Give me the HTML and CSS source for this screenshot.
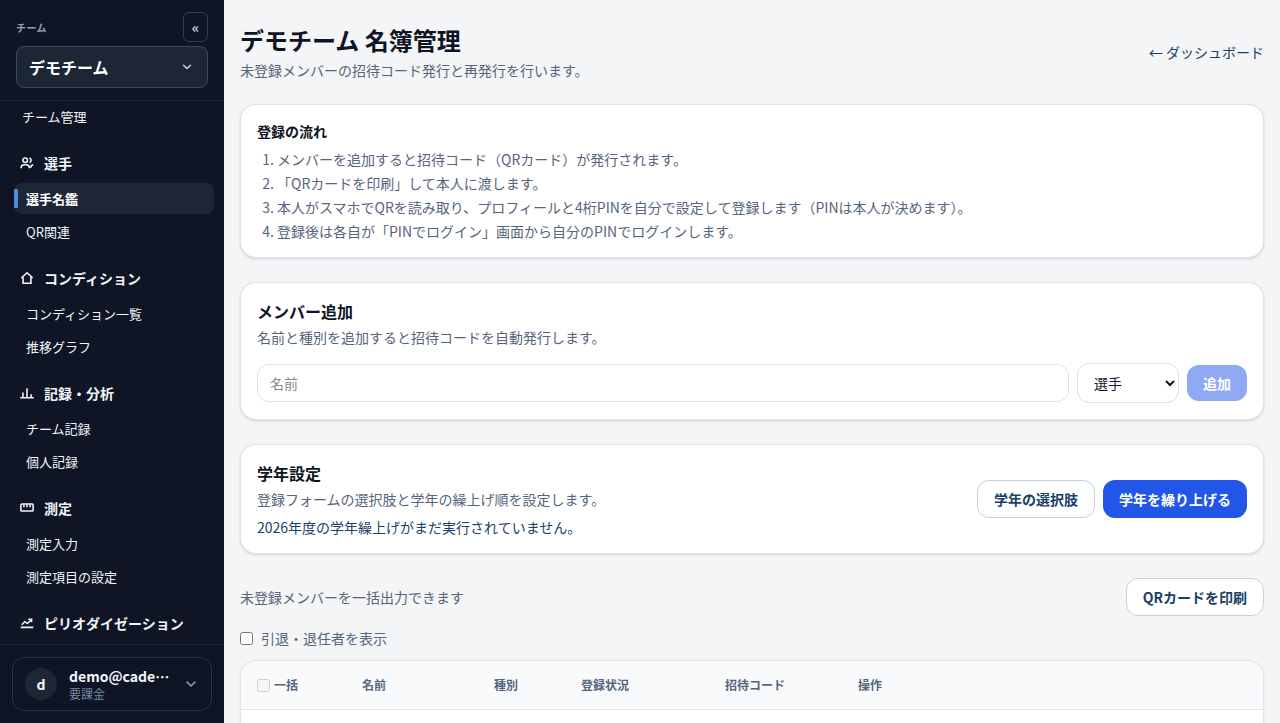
FILE: index.html
```html
<!DOCTYPE html>
<html lang="ja">
<head>
    <meta charset="UTF-8">
    <meta name="viewport" content="width=device-width, initial-scale=1.0">
    <title>デモチーム 名簿管理</title>
    <link rel="stylesheet" href="styles.css">
</head>
<body>
    <aside class="sidebar">
        <div class="sidebar-head">
            <div class="team-row">
                <span class="team-label">チーム</span>
                <button class="collapse">«</button>
            </div>
            <button class="team-select">
                <span>デモチーム</span>
                <svg class="chevron" viewBox="0 0 16 16"><path d="M4.500 6.200L8 9.500l3.500-3.300"/></svg>
            </button>
        </div>
        <nav class="nav">
            <a class="nav-top" href="#">チーム管理</a>
            <section class="nav-group">
                <h2>
                    <svg viewBox="0 0 16 16"><circle cx="6" cy="4.800" r="2.600"/><path d="M1.300 14v-1a3.500 3.500 0 0 1 3.500-3h2.400a3.500 3.500 0 0 1 3.500 3v1M10.800 2.300a2.600 2.600 0 0 1 0 5M12 13.500l1-2.500 2.200-1"/></svg>
                    選手
                </h2>
                <a class="active" href="#">選手名鑑</a>
                <a href="#">QR関連</a>
            </section>
            <section class="nav-group">
                <h2>
                    <svg viewBox="0 0 16 16"><path d="M1.500 8L8 2l6.500 6M3.500 7v7h9V7"/></svg>
                    コンディション
                </h2>
                <a href="#">コンディション一覧</a>
                <a href="#">推移グラフ</a>
            </section>
            <section class="nav-group">
                <h2>
                    <svg viewBox="0 0 16 16"><path d="M.3 13.500h15.400M3.300 13V7.500M8 13V2.500M12.700 13V9.500"/></svg>
                    記録・分析
                </h2>
                <a href="#">チーム記録</a>
                <a href="#">個人記録</a>
            </section>
            <section class="nav-group">
                <h2>
                    <svg viewBox="0 0 16 16"><rect x="1" y="3.500" width="14" height="8" rx="1"/><path d="M4.500 4v3M8 4v3M11.500 4v3"/></svg>
                    測定
                </h2>
                <a href="#">測定入力</a>
                <a href="#">測定項目の設定</a>
            </section>
            <section class="nav-group">
                <h2>
                    <svg viewBox="0 0 16 16"><path d="M.8 13h14.400M2 10l3.500-3.500 3 2L13 4M9.500 3.800h3.700v3.400"/></svg>
                    ピリオダイゼーション
                </h2>
            </section>
        </nav>
        <div class="sidebar-foot">
            <button class="account">
                <span class="avatar">d</span>
                <span class="account-text">
                    <span class="account-name">demo@cade⋯</span>
                    <span class="account-plan">要課金</span>
                </span>
                <svg class="chevron" viewBox="0 0 16 16"><path d="M4 6l4 4 4-4"/></svg>
            </button>
        </div>
    </aside>

    <main class="main">
        <header class="page-head">
            <div>
                <h1>デモチーム 名簿管理</h1>
                <p>未登録メンバーの招待コード発行と再発行を行います。</p>
            </div>
            <a href="#">← ダッシュボード</a>
        </header>

        <section class="card flow">
            <h3>登録の流れ</h3>
            <ol>
                <li>メンバーを追加すると招待コード（QRカード）が発行されます。</li>
                <li>「QRカードを印刷」して本人に渡します。</li>
                <li>本人がスマホでQRを読み取り、プロフィールと4桁PINを自分で設定して登録します（PINは本人が決めます）。</li>
                <li>登録後は各自が「PINでログイン」画面から自分のPINでログインします。</li>
            </ol>
        </section>

        <section class="card add">
            <h2>メンバー追加</h2>
            <p>名前と種別を追加すると招待コードを自動発行します。</p>
            <form class="add-form">
                <input type="text" placeholder="名前">
                <select>
                    <option>選手</option>
                    <option>スタッフ</option>
                </select>
                <button class="btn primary" type="button" disabled>追加</button>
            </form>
        </section>

        <section class="card grade">
            <div>
                <h2>学年設定</h2>
                <p>登録フォームの選択肢と学年の繰上げ順を設定します。</p>
                <p class="notice">2026年度の学年繰上げがまだ実行されていません。</p>
            </div>
            <div class="actions">
                <button class="btn outline">学年の選択肢</button>
                <button class="btn primary">学年を繰り上げる</button>
            </div>
        </section>

        <div class="export">
            <p>未登録メンバーを一括出力できます</p>
            <button class="btn outline">QRカードを印刷</button>
        </div>

        <label class="show-retired"><input type="checkbox">引退・退任者を表示</label>

        <div class="table-wrap">
            <table>
                <thead>
                    <tr>
                        <th class="col-bulk"><label><input type="checkbox" disabled>一括</label></th>
                        <th class="col-name">名前</th>
                        <th class="col-type">種別</th>
                        <th class="col-status">登録状況</th>
                        <th class="col-code">招待コード</th>
                        <th>操作</th>
                    </tr>
                </thead>
            </table>
        </div>
    </main>
</body>
</html>
```

FILE: styles.css
```css
* {
    box-sizing: border-box;
}
body {
    display: flex;
    height: 100vh;
    margin: 0;
    overflow: hidden;
    background-color: #f3f5f7;
    color: #0f1424;
    font-family: "Noto Sans CJK JP", sans-serif;
    font-size: 14px;
    line-height: 20px;
}
h1, h2, h3, p, ol {
    margin: 0;
}
a {
    text-decoration: none;
}
button, input, select {
    font: inherit;
}

/* sidebar */
.sidebar {
    display: flex;
    flex-direction: column;
    flex: none;
    width: 224px;
    background-color: #0f1525;
    color: #f1f5f9;
}
.sidebar-head {
    height: 101px;
    padding: 12px 16px;
    border-bottom: 1px solid #1e2635;
}
.team-row {
    display: flex;
    align-items: center;
    justify-content: space-between;
    height: 30px;
    margin-bottom: 4px;
}
.team-label {
    padding-top: 2px;
    color: #94a3b8;
    font-size: 10px;
    font-weight: 700;
    letter-spacing: 0.4px;
}
.collapse {
    width: 25px;
    height: 30px;
    padding: 0;
    border: 1px solid #333c4a;
    border-radius: 6px;
    background: none;
    color: #cbd5e1;
    font-size: 14px;
    font-weight: 700;
}
.team-select {
    display: flex;
    align-items: center;
    justify-content: space-between;
    width: 100%;
    height: 42px;
    padding: 0 12px;
    border: 1px solid #3f4957;
    border-radius: 8px;
    background-color: #1c2635;
    color: #fff;
    font-size: 16px;
    font-weight: 700;
}
.chevron {
    flex: none;
    width: 16px;
    height: 16px;
    fill: none;
    stroke: #cbd5e1;
    stroke-width: 1.5;
    stroke-linecap: round;
    stroke-linejoin: round;
}
.nav {
    flex: 1;
    min-height: 0;
    overflow: hidden;
    padding: 0 10px 0 14px;
}
.nav a {
    display: flex;
    align-items: center;
    height: 31px;
    margin-bottom: 2px;
    padding-left: 12px;
    border-radius: 8px;
    color: #f1f5f9;
    font-size: 13px;
}
.nav a.nav-top {
    padding-left: 8px;
    margin-bottom: 15px;
}
.nav-group {
    height: 115px;
}
.nav-group:last-child {
    height: 32px;
}
.nav-group h2 {
    display: flex;
    align-items: center;
    gap: 10px;
    height: 32px;
    margin-bottom: 4px;
    padding-left: 6px;
    font-size: 14px;
    font-weight: 700;
}
.nav-group h2 svg {
    width: 14px;
    height: 14px;
    fill: none;
    stroke: currentColor;
    stroke-width: 1.8;
}
.nav a.active {
    background-color: #1c2635;
    color: #fff;
    font-weight: 700;
}
.nav a.active::before {
    content: "";
    width: 4px;
    height: 19px;
    margin: 0 8px 0 -12px;
    border-radius: 1px;
    background-color: #4a90d9;
}
.sidebar-foot {
    height: 79px;
    padding: 12px;
    border-top: 1px solid #1e2635;
}
.account {
    display: flex;
    align-items: center;
    width: 100%;
    height: 54px;
    padding: 0 12px;
    border: 1px solid #2b3443;
    border-radius: 12px;
    background: none;
    color: #f1f5f9;
    text-align: left;
}
.account .chevron {
    stroke: #94a3b8;
}
.avatar {
    flex: none;
    width: 32px;
    height: 32px;
    margin-right: 12px;
    border-radius: 50%;
    background-color: #1c2635;
    font-weight: 700;
    line-height: 32px;
    text-align: center;
}
.account-text {
    flex: 1;
    min-width: 0;
    margin-right: 12px;
}
.account-name {
    display: block;
    font-weight: 700;
    line-height: 18px;
    white-space: nowrap;
}
.account-plan {
    display: block;
    padding-top: 1px;
    color: #7688a3;
    font-size: 12px;
    line-height: 16px;
}

/* main */
.main {
    flex: 1;
    display: flex;
    flex-direction: column;
    min-width: 0;
    padding: 24px 16px 0;
}
.page-head {
    display: flex;
    align-items: center;
    justify-content: space-between;
    height: 56px;
    margin-bottom: 24px;
}
.page-head h1 {
    margin-bottom: 4px;
    font-size: 24px;
    line-height: 32px;
}
.page-head a {
    color: #1a4068;
}
.main p {
    color: #56657c;
}
.card {
    flex: none;
    margin-bottom: 24px;
    padding: 16px;
    border: 1px solid #e0e4ea;
    border-radius: 16px;
    background-color: #fff;
    box-shadow: 0 1px 3px rgba(15, 20, 36, 0.1), 0 1px 2px rgba(15, 20, 36, 0.06);
}
.card h2 {
    font-size: 16px;
    line-height: 24px;
}
.flow {
    height: 154px;
}
.flow h3 {
    margin-bottom: 8px;
    font-size: 14px;
    line-height: 20px;
}
.flow ol {
    padding-left: 20px;
    color: #56657c;
}
.flow li {
    margin-bottom: 4px;
}
.add {
    height: 138px;
}
.add p {
    margin: 4px 0 16px;
}
.add-form {
    display: flex;
    align-items: center;
    gap: 8px;
}
.add-form input {
    flex: 1;
    height: 38px;
    padding: 0 12px;
    border: 1px solid #dde2e9;
    border-radius: 12px;
    background-color: #fff;
}
.add-form input::placeholder {
    color: #8a8a8a;
}
.add-form select {
    width: 102px;
    height: 40px;
    padding: 0 0 0 12px;
    border: 1px solid #dde2e9;
    border-radius: 12px;
    background-color: #fff;
    color: #0f1424;
}
.btn {
    height: 38px;
    padding: 0 16px;
    border: 1px solid transparent;
    border-radius: 12px;
    font-weight: 700;
}
.primary {
    border: none;
    background-color: #2156e8;
    color: #fff;
}
.primary:disabled {
    height: 36px;
    opacity: 0.5;
}
.outline {
    border-color: #c6d0dc;
    background-color: #fff;
    color: #1a4068;
}
.grade {
    display: flex;
    align-items: center;
    justify-content: space-between;
    height: 110px;
}
.grade p {
    margin-top: 4px;
}
.grade p.notice {
    margin-top: 8px;
    color: #1a4068;
}
.actions {
    display: flex;
    gap: 8px;
}
.export {
    display: flex;
    align-items: center;
    justify-content: space-between;
    margin-bottom: 12px;
}
.show-retired {
    display: flex;
    align-items: center;
    gap: 8px;
    margin-bottom: 12px;
    color: #56657c;
}
input[type="checkbox"] {
    width: 13px;
    height: 13px;
    margin: 0;
}
.table-wrap {
    flex: 1;
    overflow: hidden;
    border: 1px solid #e0e4ea;
    border-bottom: none;
    border-radius: 16px 16px 0 0;
    background-color: #fff;
    box-shadow: 0 1px 3px rgba(15, 20, 36, 0.1);
}
table {
    width: 100%;
    table-layout: fixed;
    border-collapse: separate;
    border-spacing: 0;
}
th {
    height: 49px;
    padding: 0 16px;
    border-bottom: 1px solid #e0e4ea;
    background-color: #f8fafc;
    color: #56657c;
    font-size: 12px;
    text-align: left;
}
th label {
    display: flex;
    align-items: center;
    gap: 4px;
}
.col-bulk {
    width: 105px;
}
.col-name {
    width: 132px;
}
.col-type {
    width: 87px;
}
.col-status {
    width: 144px;
}
.col-code {
    width: 133px;
}
```
